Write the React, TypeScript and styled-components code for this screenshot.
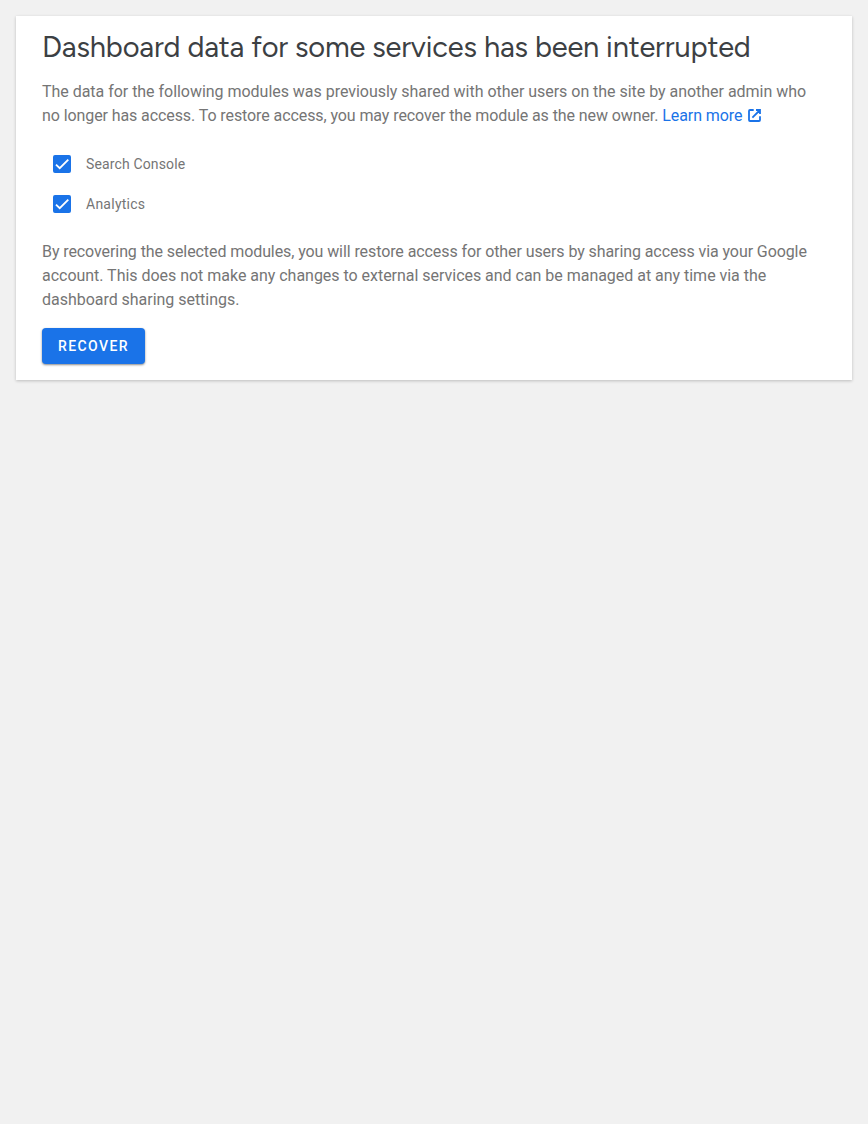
import React, { useState } from 'react';
import styled, { createGlobalStyle } from 'styled-components';

const GlobalStyle = createGlobalStyle`
  body { margin: 0; background: #f1f1f1; font-family: Roboto, "Liberation Sans", sans-serif; }
  *, *::before, *::after { box-sizing: border-box; }
`;

const Notice = styled.section`
  margin: 16px;
  padding: 11px 26px 16px;
  background: #fff;
  box-shadow: 0 1px 3px rgba(0, 0, 0, 0.22);
`;

const Title = styled.h3`
  margin: 0 0 13px;
  font: 400 29px/40px Figtree, Lato, sans-serif;
  letter-spacing: -0.16px;
  color: #3c4043;
  white-space: nowrap;
`;

const Text = styled.p`
  margin: 0;
  font-size: 16px;
  line-height: 24px;
  color: #757575;
`;

const Line = styled.span<{ $tracking: number }>`
  display: block;
  white-space: nowrap;
  letter-spacing: ${(p) => p.$tracking}px;
`;

const Link = styled.a`
  color: #1a73e8;
  letter-spacing: -0.09px;
  text-decoration: none;
  svg { margin-left: 5.7px; vertical-align: -1px; }
`;

const ModuleList = styled.div`
  display: flex;
  flex-direction: column;
  margin: 16px 0;
`;

const ModuleLabel = styled.label<{ $tracking: number }>`
  display: flex;
  align-items: center;
  height: 40px;
  padding-left: 11px;
  gap: 15px;
  font-size: 14px;
  letter-spacing: ${(p) => p.$tracking}px;
  color: #757575;
`;

const Checkbox = styled.button`
  display: flex;
  width: 18px;
  height: 18px;
  padding: 0;
  border: 2px solid #1a73e8;
  border-radius: 2px;
  background: #1a73e8;
`;

const RecoverButton = styled.button`
  display: block;
  height: 36px;
  margin-top: 16px;
  padding: 0 16px;
  border: 0;
  border-radius: 4px;
  background: #1a73e8;
  color: #fff;
  font: 500 14px/36px Roboto, sans-serif;
  letter-spacing: 1.4px;
  text-transform: uppercase;
  box-shadow: 0 1px 2px rgba(0, 0, 0, 0.35), 0 1px 3px rgba(0, 0, 0, 0.15);
`;

function ModuleOption({ name, tracking }: { name: string; tracking: number }) {
  const [checked, setChecked] = useState(true);
  return (
    <ModuleLabel $tracking={tracking}>
      <Checkbox role="checkbox" aria-checked={checked} onClick={() => setChecked(!checked)}>
        {checked && (
          <svg width="14" height="14" viewBox="0 0 24 24" fill="none" stroke="#fff" strokeWidth="3.12">
            <path d="M1.73 12.91 8.1 19.28 22.79 4.59" />
          </svg>
        )}
      </Checkbox>
      {name}
    </ModuleLabel>
  );
}

export default function App() {
  return (
    <>
      <GlobalStyle />
      <Notice>
        <Title>Dashboard data for some services has been interrupted</Title>
        <Text>
          <Line $tracking={-0.03}>
            The data for the following modules was previously shared with other users on the site by another admin who
          </Line>
          <Line $tracking={-0.09}>
            no longer has access. To restore access, you may recover the module as the new owner.{' '}
            <Link href="#">
              Learn more
              <svg width="13" height="13" viewBox="0 0 13 13" fill="none" stroke="currentColor" strokeWidth="1.8">
                <path d="M5.7 1H2a1 1 0 0 0-1 1v9a1 1 0 0 0 1 1h9a1 1 0 0 0 1-1V7.3M8 1h4v4M12 1 4.4 8.6" />
              </svg>
            </Link>
          </Line>
        </Text>
        <ModuleList>
          <ModuleOption name="Search Console" tracking={0.14} />
          <ModuleOption name="Analytics" tracking={0.25} />
        </ModuleList>
        <Text>
          <Line $tracking={-0.088}>
            By recovering the selected modules, you will restore access for other users by sharing access via your Google
          </Line>
          <Line $tracking={-0.025}>
            account. This does not make any changes to external services and can be managed at any time via the
          </Line>
          <Line $tracking={-0.03}>dashboard sharing settings.</Line>
        </Text>
        <RecoverButton>Recover</RecoverButton>
      </Notice>
    </>
  );
}
